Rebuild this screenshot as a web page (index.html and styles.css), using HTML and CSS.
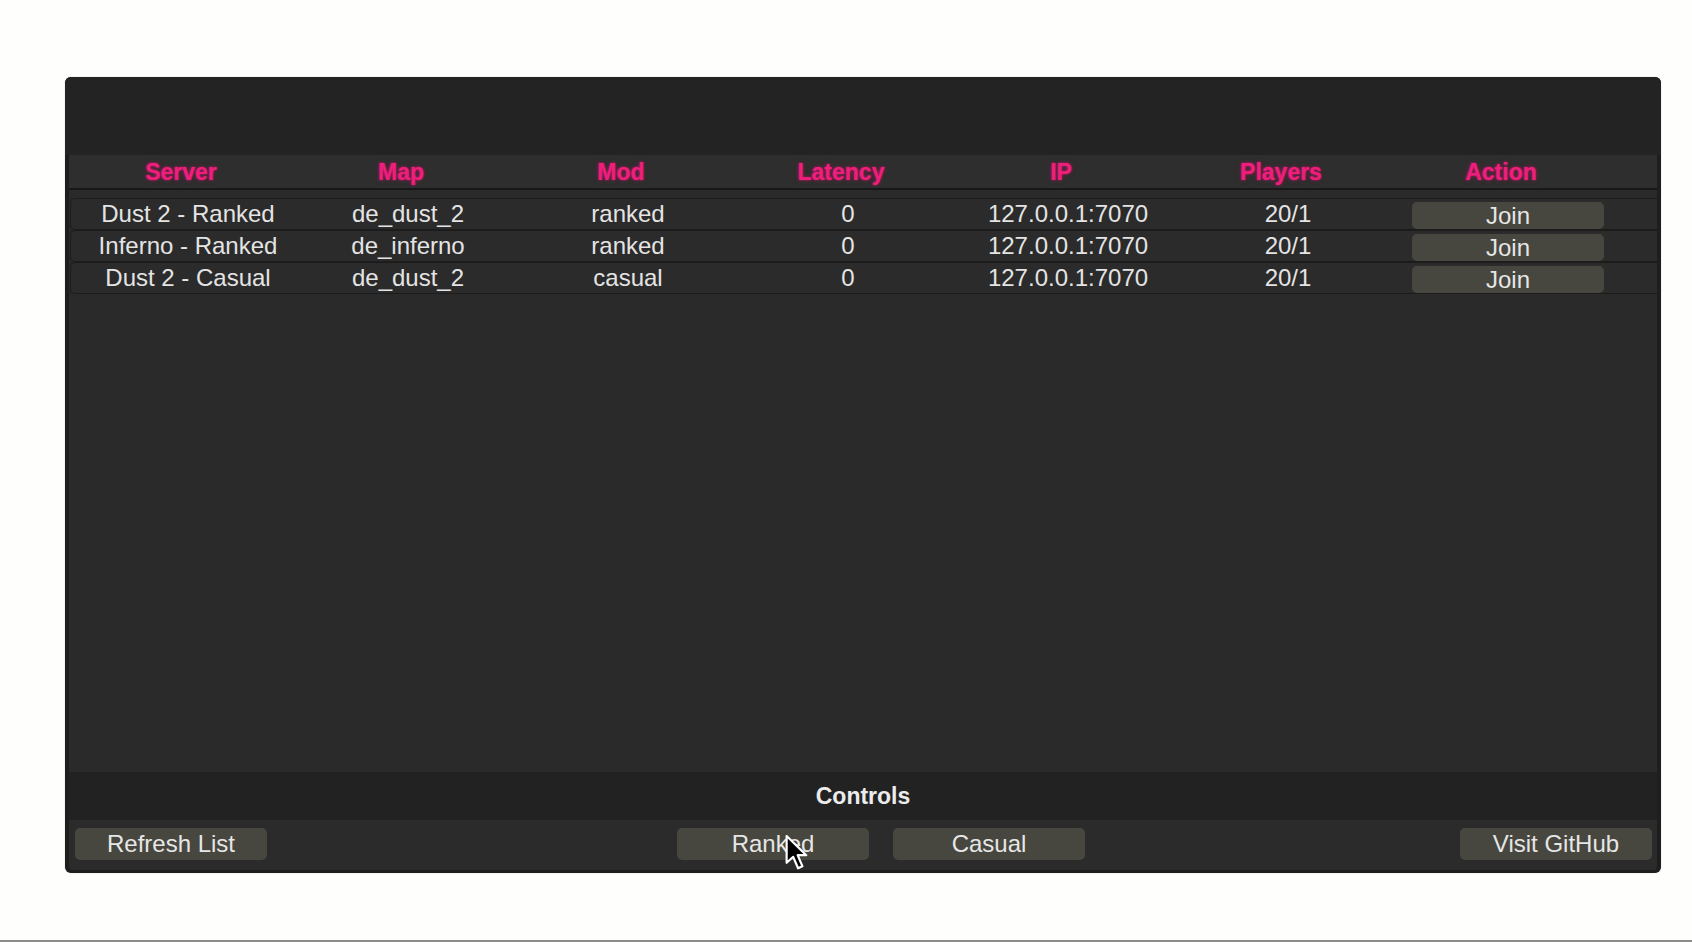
FILE: index.html
```html
<!DOCTYPE html>
<html lang="en">
<head>
<meta charset="utf-8">
<title>Server Browser</title>
<link rel="stylesheet" href="styles.css">
</head>
<body>
<div class="page">
  <div class="panel">
    <div class="panel-top"></div>
    <div class="thead">
      <div class="th">Server</div>
      <div class="th">Map</div>
      <div class="th">Mod</div>
      <div class="th">Latency</div>
      <div class="th">IP</div>
      <div class="th">Players</div>
      <div class="th">Action</div>
    </div>
    <div class="tbody">
      <div class="row">
        <div class="td">Dust 2 - Ranked</div>
        <div class="td">de_dust_2</div>
        <div class="td">ranked</div>
        <div class="td">0</div>
        <div class="td">127.0.0.1:7070</div>
        <div class="td">20/1</div>
        <div class="td action"><button class="btn join">Join</button></div>
      </div>
      <div class="row">
        <div class="td">Inferno - Ranked</div>
        <div class="td">de_inferno</div>
        <div class="td">ranked</div>
        <div class="td">0</div>
        <div class="td">127.0.0.1:7070</div>
        <div class="td">20/1</div>
        <div class="td action"><button class="btn join">Join</button></div>
      </div>
      <div class="row">
        <div class="td">Dust 2 - Casual</div>
        <div class="td">de_dust_2</div>
        <div class="td">casual</div>
        <div class="td">0</div>
        <div class="td">127.0.0.1:7070</div>
        <div class="td">20/1</div>
        <div class="td action"><button class="btn join">Join</button></div>
      </div>
    </div>
    <div class="controls-title">Controls</div>
    <div class="controls-bar">
      <button class="btn">Refresh List</button>
      <div class="mode-group">
        <button class="btn">Ranked</button>
        <button class="btn">Casual</button>
      </div>
      <button class="btn github">Visit GitHub</button>
    </div>
  </div>
  <svg class="cursor" width="24" height="38" viewBox="0 0 22 34" aria-hidden="true">
    <path d="M1.5 1.5 L1.5 26 L7.5 20.5 L12 31 L16 29.2 L11.6 19 L19.5 19 Z" fill="#000" stroke="#fff" stroke-width="2" stroke-linejoin="round"/>
  </svg>
</div>
</body>
</html>
```

FILE: styles.css
```css
* {
  box-sizing: border-box;
}

html, body {
  margin: 0;
  padding: 0;
  background: #fefefc;
}

body {
  font-family: "Liberation Sans", Arial, Helvetica, sans-serif;
}

.page {
  position: relative;
  height: 942px;
  padding-top: 77px;
  padding-left: 65px;
  border-bottom: 2px solid #8c8c8c;
}

.panel {
  width: 1596px;
  height: 796px;
  background: #1e1e1e;
  border-radius: 6px;
  padding: 0 4px 3px 4px;
  display: flex;
  flex-direction: column;
  box-shadow: 0 0 1px rgba(0, 0, 0, 0.4);
}

.panel-top {
  flex: 0 0 78px;
  margin: 0 -4px;
  background: #232323;
  border-radius: 6px 6px 0 0;
}

.thead {
  flex: 0 0 35px;
  display: flex;
  padding-left: 2px;
  padding-top: 1px;
  background: #2e2e2e;
  border-bottom: 2px solid #181818;
}

.th {
  width: 220px;
  text-align: center;
  line-height: 32px;
  font-size: 23px;
  font-weight: bold;
  color: #ee1f7c;
  text-shadow: 0 0 2px rgba(214, 20, 110, 0.9), 0 0 4px rgba(200, 20, 100, 0.5);
}

.tbody {
  flex: 1 1 auto;
  background: #2a2a2a;
  padding: 8px 0 0 1px;
  display: flex;
  flex-direction: column;
}

.row {
  flex: 0 0 32px;
  display: flex;
  padding-left: 7px;
  border: 1px solid #1c1c1c;
  border-right: none;
  border-radius: 5px 0 0 5px;
  background: #2b2b2b;
}

.td {
  width: 220px;
  text-align: center;
  line-height: 30px;
  font-size: 24px;
  color: #e4e4e4;
}

.action {
  display: flex;
  justify-content: center;
  align-items: flex-start;
  padding-top: 3px;
}

.btn {
  width: 192px;
  height: 32px;
  padding: 0;
  border: none;
  border-radius: 5px;
  background: #47473f;
  color: #e6e6e6;
  font-family: "Liberation Sans", Arial, Helvetica, sans-serif;
  font-size: 24px;
  line-height: 32px;
  text-align: center;
}

.btn.join {
  height: 27px;
  line-height: 27px;
}

.controls-title {
  flex: 0 0 48px;
  line-height: 48px;
  background: #222222;
  text-align: center;
  font-size: 23px;
  font-weight: bold;
  color: #ececec;
}

.controls-bar {
  flex: 0 0 50px;
  display: flex;
  align-items: flex-start;
  padding: 8px 5px 0 6px;
  background: #2b2b2b;
  border-radius: 0 0 4px 4px;
}

.mode-group {
  display: flex;
  gap: 24px;
  margin-left: 410px;
}

.github {
  margin-left: auto;
}

.cursor {
  position: absolute;
  left: 785px;
  top: 834px;
}
```
